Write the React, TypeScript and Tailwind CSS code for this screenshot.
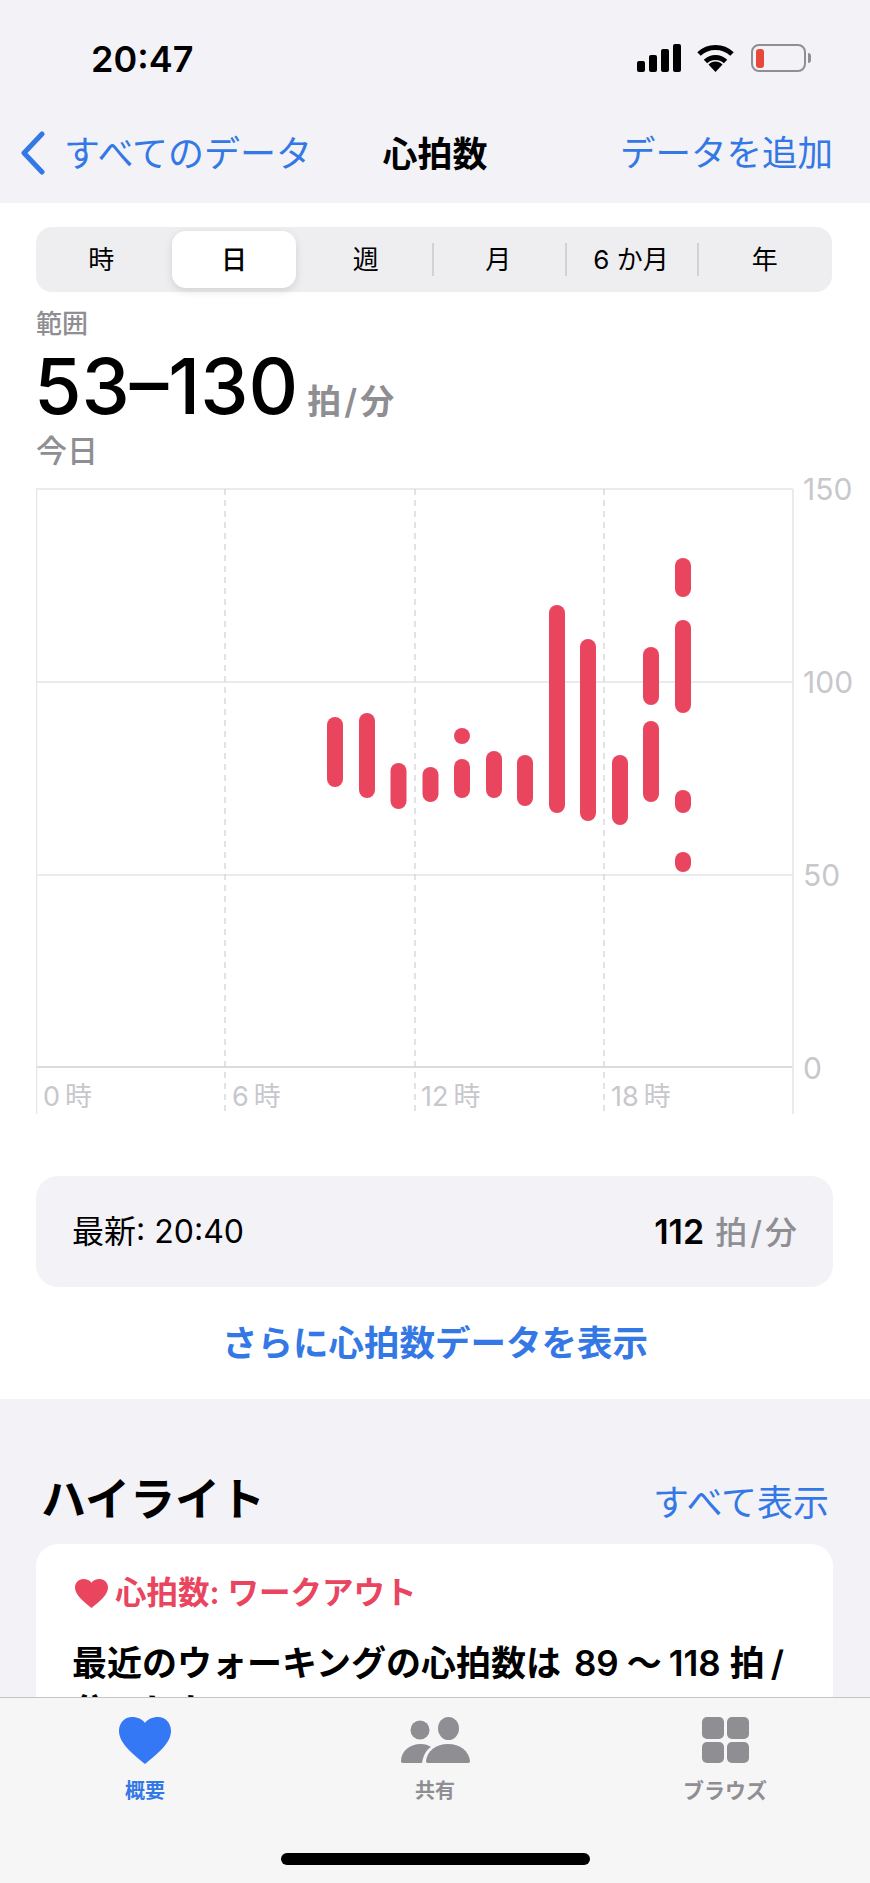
import React from "react"

const segments = ["時", "日", "週", "月", "6 か月", "年"]

// [x centre, top, bottom] measured against the page
const bars: [number, number, number][] = [
  [335, 717, 787],
  [367, 713, 798],
  [398.500, 763, 809],
  [430.500, 767, 802],
  [462, 728, 744],
  [462, 759, 798],
  [494, 751, 798],
  [525, 755, 806],
  [557, 605, 813],
  [588, 639, 821],
  [620, 755, 825],
  [651, 647, 705],
  [651, 721, 802],
  [683, 558, 597],
  [683, 620, 713],
  [683, 790, 813],
  [683, 852, 872],
]

const hourLabels: [number, string][] = [
  [43, "0"],
  [232, "6"],
  [421, "12"],
  [611, "18"],
]

function HeartIcon({ className }: { className: string }) {
  return (
    <svg viewBox="0 0 24 22" preserveAspectRatio="none" className={ className } fill="currentColor">
      <path d="M12 22C6 17 0 12 0 6.500 0 2.800 2.600 0 6 0 8.600 0 10.800 1 12 2.800 13.200 1 15.400 0 18 0c3.400 0 6 2.800 6 6.500C24 12 18 17 12 22Z" />
    </svg>
  )
}

function StatusIcons() {
  return (
    <div className="flex items-center">
      <div className="flex items-end gap-[4px] h-[28px]">
        <span className="w-[8px] h-[11px] rounded-[2px] bg-black" />
        <span className="w-[8px] h-[17px] rounded-[2px] bg-black" />
        <span className="w-[8px] h-[23px] rounded-[2px] bg-black" />
        <span className="w-[8px] h-[28px] rounded-[2px] bg-black" />
      </div>
      <svg viewBox="0 0 37 28" className="w-[37px] h-[28px] ml-[16px]" fill="none" stroke="#000" strokeWidth="5">
        <path d="M2 10a24 24 0 0 1 33 0" />
        <path d="M8.500 17.500a14.500 14.500 0 0 1 20 0" />
        <path d="M18.500 28l-7-7.500a9.500 9.500 0 0 1 14 0Z" fill="#000" stroke="none" />
      </svg>
      <div className="ml-[17px] flex items-center">
        <div className="w-[55px] h-[28px] rounded-[8px] border-[2.5px] border-[#8e8e93] flex items-center pl-[3px]">
          <span className="w-[8px] h-[19px] rounded-[3px] bg-[#e8483a]" />
        </div>
        <span className="ml-[2px] w-[3px] h-[10px] rounded-r-[3px] bg-[#8e8e93]" />
      </div>
    </div>
  )
}

function Unit() {
  return (
    <span>拍<span className="mx-[3px]">/</span>分</span>
  )
}

function Chart() {
  return (
    <svg viewBox="36 470 834 650" className="block w-[834px] h-[650px] ml-[36px] -mt-[1px]">
      <g stroke="#e5e5ea" strokeWidth="1.5">
        <line x1="36" y1="489" x2="793" y2="489" />
        <line x1="36" y1="682" x2="793" y2="682" />
        <line x1="36" y1="875" x2="793" y2="875" />
        <line x1="36" y1="1067" x2="793" y2="1067" stroke="#dcdce0" strokeWidth="2" />
        <line x1="36.500" y1="489" x2="36.500" y2="1114" />
        <line x1="793" y1="489" x2="793" y2="1114" />
      </g>
      <g stroke="#d1d1d6" strokeWidth="1.2" strokeDasharray="6 5">
        <line x1="225" y1="489" x2="225" y2="1114" />
        <line x1="415" y1="489" x2="415" y2="1114" />
        <line x1="604" y1="489" x2="604" y2="1114" />
      </g>
      { bars.map(([x, top, bottom], i) => (
        <rect key={ i } x={ x - 8 } y={ top } width="16" height={ bottom - top } rx="8" fill="#e9455f" />
      )) }
      <g fill="#c7c7cc" fontSize="30">
        <text x="803" y="500">150</text>
        <text x="803" y="693">100</text>
        <text x="803" y="886">50</text>
        <text x="803" y="1079">0</text>
      </g>
      <g fill="#c7c7cc" fontSize="27">
        { hourLabels.map(([x, h]) => (
          <text key={ h } x={ x } y="1106">{ h }<tspan dx="5">時</tspan></text>
        )) }
      </g>
    </svg>
  )
}

function PeopleIcon() {
  return (
    <svg viewBox="0 0 69 46" className="w-[69px] h-[46px]" fill="#8e8e93">
      <circle cx="19" cy="13" r="9.500" />
      <ellipse cx="47.500" cy="11.500" rx="10.500" ry="11.500" />
      <path d="M2 46c-1.500 0-2-1-2-2C0 34 9 27 20 27c4 0 7 1 10 3-5 3-8 9-9 16Z" />
      <path d="M27 46c-1.500 0-2-1-2-2 1-10 10-17 22-17s21 7 22 17c0 1-.5 2-2 2Z" />
    </svg>
  )
}

function GridIcon() {
  return (
    <div className="grid grid-cols-2 gap-[3px] w-[47px] h-[46px]">
      <span className="rounded-[5px] bg-[#8e8e93]" />
      <span className="rounded-[5px] bg-[#8e8e93]" />
      <span className="rounded-[5px] bg-[#8e8e93]" />
      <span className="rounded-[5px] bg-[#8e8e93]" />
    </div>
  )
}

export default function App() {
  return (
    <div className="relative w-[870px] h-[1883px] overflow-hidden bg-[#f2f2f7] text-black font-['Inter','Noto_Sans_CJK_JP',sans-serif]">
      <header className="h-[203px]">
        <div className="flex justify-between items-center pt-[44px] pl-[91px] pr-[59px] h-[72px]">
          <span className="mt-[2px] text-[36px] leading-[28px] font-semibold">20:47</span>
          <StatusIcons />
        </div>
        <div className="grid grid-cols-[1fr_auto_1fr] items-center mt-[58px] h-[48px] px-[20px] text-[#3478e5]">
          <div className="flex items-center">
            <svg viewBox="0 0 26 44" className="w-[26px] h-[44px] -mt-[2px]" fill="none" stroke="currentColor" strokeWidth="5" strokeLinecap="round" strokeLinejoin="round">
              <path d="M22 3 4 22l18 19" />
            </svg>
            <span className="ml-[18px] text-[36px] leading-[48px] whitespace-nowrap">すべてのデータ</span>
          </div>
          <span className="text-[35px] leading-[48px] font-bold text-black whitespace-nowrap">心拍数</span>
          <span className="mr-[17px] text-[35.500px] leading-[48px] text-right whitespace-nowrap">データを追加</span>
        </div>
      </header>

      <section className="bg-white h-[1196px] pt-[24px]">
        <div className="mx-[36px] h-[65px] w-[796px] grid grid-cols-6 rounded-[16px] bg-[#eeeef0] text-[26px]">
          { segments.map((s, i) => (
            <div key={ s } className="flex items-center">
              <span className={ i === 1
                ? "flex-1 h-[57px] ml-[3px] mr-[5px] flex items-center justify-center rounded-[14px] bg-white font-medium shadow-[0_3px_8px_rgba(0,0,0,0.12)]"
                : "flex-1 text-center -ml-[2px]" }>
                { s }
              </span>
              { i >= 2 && i < 5 && <span className="w-[2px] h-[33px] bg-[#d1d1d6]" /> }
            </div>
          )) }
        </div>

        <div className="ml-[36px] mt-[15px] text-[26px] leading-[34px] font-medium text-[#8e8e93]">範囲</div>
        <div className="ml-[34px] mt-[6px] flex items-baseline h-[78px]">
          <span className="text-[77px] leading-[78px] font-medium">53–130</span>
          <span className="ml-[9px] text-[34px] font-semibold text-[#8e8e93]"><Unit /></span>
        </div>
        <div className="ml-[36px] mt-[6px] text-[31px] leading-[40px] font-medium text-[#8e8e93]">今日</div>

        <Chart />

        <div className="mx-[36px] mt-[56px] w-[797px] h-[111px] rounded-[22px] bg-[#f2f2f7] flex items-center justify-between pl-[36px] pr-[36px] text-[32px]">
          <span>最新: 20:40</span>
          <span>
            <span className="text-[34px] font-semibold">112</span>
            <span className="ml-[11px] font-medium text-[#8e8e93]"><Unit /></span>
          </span>
        </div>
        <div className="mt-[33px] text-center text-[35.500px] leading-[48px] font-semibold text-[#3478e5]">さらに心拍数データを表示</div>
      </section>

      <div className="flex justify-between items-baseline mt-[73px] pl-[41px] pr-[41px]">
        <span className="text-[45px] leading-[56px] font-bold">ハイライト</span>
        <span className="text-[36px] leading-[48px] text-[#3478e5]">すべて表示</span>
      </div>
      <div className="mx-[36px] mt-[16px] w-[797px] rounded-[22px] bg-white pl-[36px] pr-[36px] pt-[29px] pb-[40px]">
        <div className="flex items-center text-[#e9455f] text-[31.500px] leading-[40px] font-semibold">
          <HeartIcon className="w-[33px] h-[29px] ml-[3px] mr-[7px]" />
          <span>心拍数: ワークアウト</span>
        </div>
        <p className="mt-[26px] text-[35px] leading-[48px] font-semibold">
          最近のウォーキングの心拍数は
          <span className="ml-[13px]">89</span>
          <span className="ml-[8px]">～</span>
          <span className="ml-[7px]">118</span>
          <span className="ml-[9px]">拍</span>
          <span className="ml-[6px]">/</span>
          <br />
          分でした。
        </p>
      </div>

      <nav className="absolute left-0 bottom-0 w-full h-[186px] bg-[#f6f6f7] border-t border-[#c4c4c6]">
        <div className="grid grid-cols-3 pt-[19px] text-[20px] leading-[26px] font-semibold text-[#8e8e93]">
          <div className="flex flex-col items-center">
            <div className="h-[46px] flex items-center">
              <HeartIcon className="w-[52px] h-[47px] text-[#3478f6]" />
            </div>
            <span className="mt-[15px] text-[#3478e5]">概要</span>
          </div>
          <div className="flex flex-col items-center">
            <PeopleIcon />
            <span className="mt-[15px]">共有</span>
          </div>
          <div className="flex flex-col items-center">
            <GridIcon />
            <span className="mt-[15px] text-[21px]">ブラウズ</span>
          </div>
        </div>
        <div className="absolute left-[281px] bottom-[18px] w-[309px] h-[12px] rounded-full bg-black" />
      </nav>
    </div>
  )
}
